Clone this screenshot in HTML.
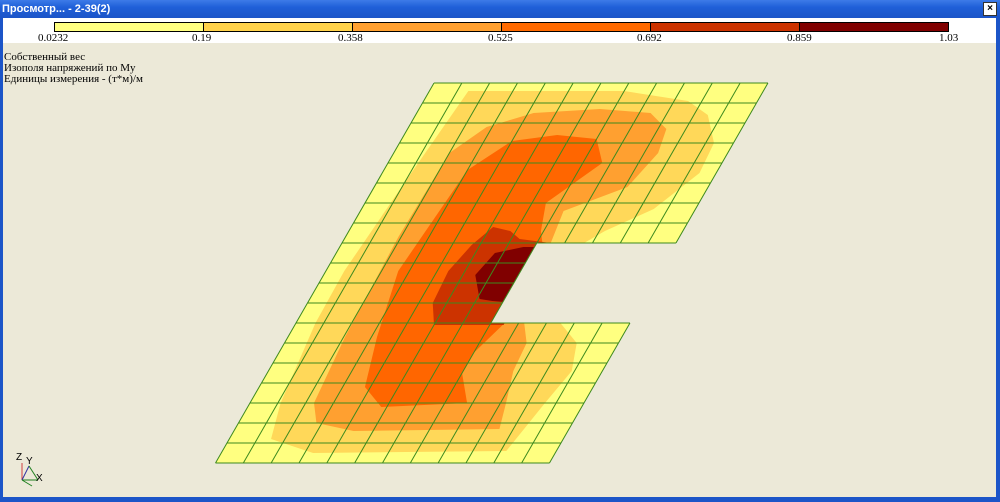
<!DOCTYPE html>
<html><head><meta charset="utf-8"><style>
body{margin:0;width:1000px;height:502px;overflow:hidden;background:#ece9d8;position:relative;font-family:"Liberation Serif",serif}
.title{position:absolute;left:0;top:0;width:1000px;height:18px;background:linear-gradient(#3d7be8,#1f5fd8 40%,#1c55c8);color:#fff;font:bold 11px "Liberation Sans",sans-serif;line-height:18px;padding-left:2px;box-sizing:border-box}
.close{position:absolute;right:3px;top:2px;width:12px;height:12px;background:#fff;border:1px solid #333;color:#000;font:bold 10px "Liberation Sans",sans-serif;line-height:12px;text-align:center}
.lb{position:absolute;left:0;top:18px;width:3px;height:484px;background:#1c55c8}
.rb{position:absolute;right:0;top:18px;width:4px;height:484px;background:#1c55c8}
.bb{position:absolute;left:0;top:497px;width:1000px;height:5px;background:#1c55c8}
.leg{position:absolute;left:3px;top:18px;width:993px;height:25px;background:#fff}
.t{position:absolute;font-size:11px;color:#000;white-space:nowrap}
</style></head><body>
<div class="title">Просмотр... - 2-39(2)<div class="close">×</div></div>
<div class="lb"></div><div class="rb"></div><div class="bb"></div>
<div class="leg"></div>
<svg style="position:absolute;left:0;top:0" width="1000" height="502">
<g stroke="#000" stroke-width="1">
<rect x="54.5" y="22.5" width="149" height="9" fill="#ffff80"/>
<rect x="203.5" y="22.5" width="149" height="9" fill="#ffd24a"/>
<rect x="352.5" y="22.5" width="149" height="9" fill="#ffa030"/>
<rect x="501.5" y="22.5" width="149" height="9" fill="#ff6a00"/>
<rect x="650.5" y="22.5" width="149" height="9" fill="#cc3300"/>
<rect x="799.5" y="22.5" width="149" height="9" fill="#800000"/>
</g>
<defs><clipPath id="c"><polygon points="0,0 12,0 12,8 7,8 7,12 12,12 12,19 0,19"/></clipPath></defs>
<g transform="matrix(27.83,0,-11.5,20,434,83)">
<g clip-path="url(#c)">
<polygon points="0,0 12,0 12,8 7,8 7,12 12,12 12,19 0,19" fill="#ffff80"/>
<polygon fill="#ffd859" points="1.4,0.4 7,0.4 9.5,0.9 10.5,1.6 11.3,3 11.4,4.5 10.5,6.3 9.2,7.4 8.7,8 9,9 9.5,12 10.5,13 10.9,14.4 10.6,16 10.2,18.4 3.3,18.5 1.5,17.8 1.1,16 0.7,12 0.66,9.4 1,5 1.2,2.7"/>
<polygon fill="#ffa030" points="4.2,1.5 6.5,1.3 8.4,1.5 9.3,2.3 9.5,3.5 9.1,5.2 7.3,6.4 7.5,8 7.6,10 8.2,12 8.7,13 8.8,14.4 9.2,16 9.5,17.3 4.3,17.4 2.8,17 2.3,16 2.05,12.7 1.9,7.7 2,3.5 2.8,2.2"/>
<polygon fill="#ff6600" points="4,2.9 5.5,2.6 7,2.8 7.7,4 6.5,6 6.9,7.4 7.2,8 7.5,10 7.5,12 7,13.5 7,14.5 7.8,16 4.8,16.2 3.8,15.2 3.2,12.7 2.6,9.4 3,4.35"/>
<polygon fill="#cc3300" points="5.1,7.2 5.8,7.4 6.3,7.8 7.5,8 7.5,12.1 5,12.1 4.5,11 4.4,9.4 4.7,8.1"/>
<polygon fill="#800000" points="5.7,8.5 6.6,8.2 7.5,8.2 7.5,11 6.6,10.9 6.1,10.8 5.45,9.6"/>
</g>
<g stroke="#3d8a1e" stroke-width="1" vector-effect="non-scaling-stroke" fill="none">
<path vector-effect="non-scaling-stroke" d="M0,0H12M0,1H12M0,2H12M0,3H12M0,4H12M0,5H12M0,6H12M0,7H12M0,8H12M0,9H7M0,10H7M0,11H7M0,12H12M0,13H12M0,14H12M0,15H12M0,16H12M0,17H12M0,18H12M0,19H12"/>
<path vector-effect="non-scaling-stroke" d="M0,0V19M1,0V19M2,0V19M3,0V19M4,0V19M5,0V19M6,0V19M7,0V19M8,0V8M9,0V8M10,0V8M11,0V8M12,0V8M8,12V19M9,12V19M10,12V19M11,12V19M12,12V19"/>
</g>
</g>
<g stroke-width="1" fill="none">
<line x1="22" y1="480" x2="22" y2="463" stroke="#d04040"/>
<line x1="22" y1="480" x2="38" y2="480" stroke="#208020"/>
<line x1="22" y1="480" x2="29" y2="466" stroke="#3030a0"/>
<line x1="29" y1="466" x2="38" y2="480" stroke="#208020"/>
<line x1="22" y1="480" x2="32" y2="486" stroke="#208020"/>
</g>
<text x="16" y="460" font-size="10" font-family="Liberation Sans">Z</text>
<text x="26" y="464" font-size="10" font-family="Liberation Sans">Y</text>
<text x="36" y="481" font-size="10" font-family="Liberation Sans">X</text>
</svg>
<div class="t" style="left:38px;top:32px">0.0232</div>
<div class="t" style="left:192px;top:32px">0.19</div>
<div class="t" style="left:338px;top:32px">0.358</div>
<div class="t" style="left:488px;top:32px">0.525</div>
<div class="t" style="left:637px;top:32px">0.692</div>
<div class="t" style="left:787px;top:32px">0.859</div>
<div class="t" style="left:939px;top:32px">1.03</div>
<div class="t" style="left:4px;top:51px">Собственный вес</div>
<div class="t" style="left:4px;top:62px">Изополя напряжений по My</div>
<div class="t" style="left:4px;top:73px">Единицы измерения - (т*м)/м</div>
</body></html>
